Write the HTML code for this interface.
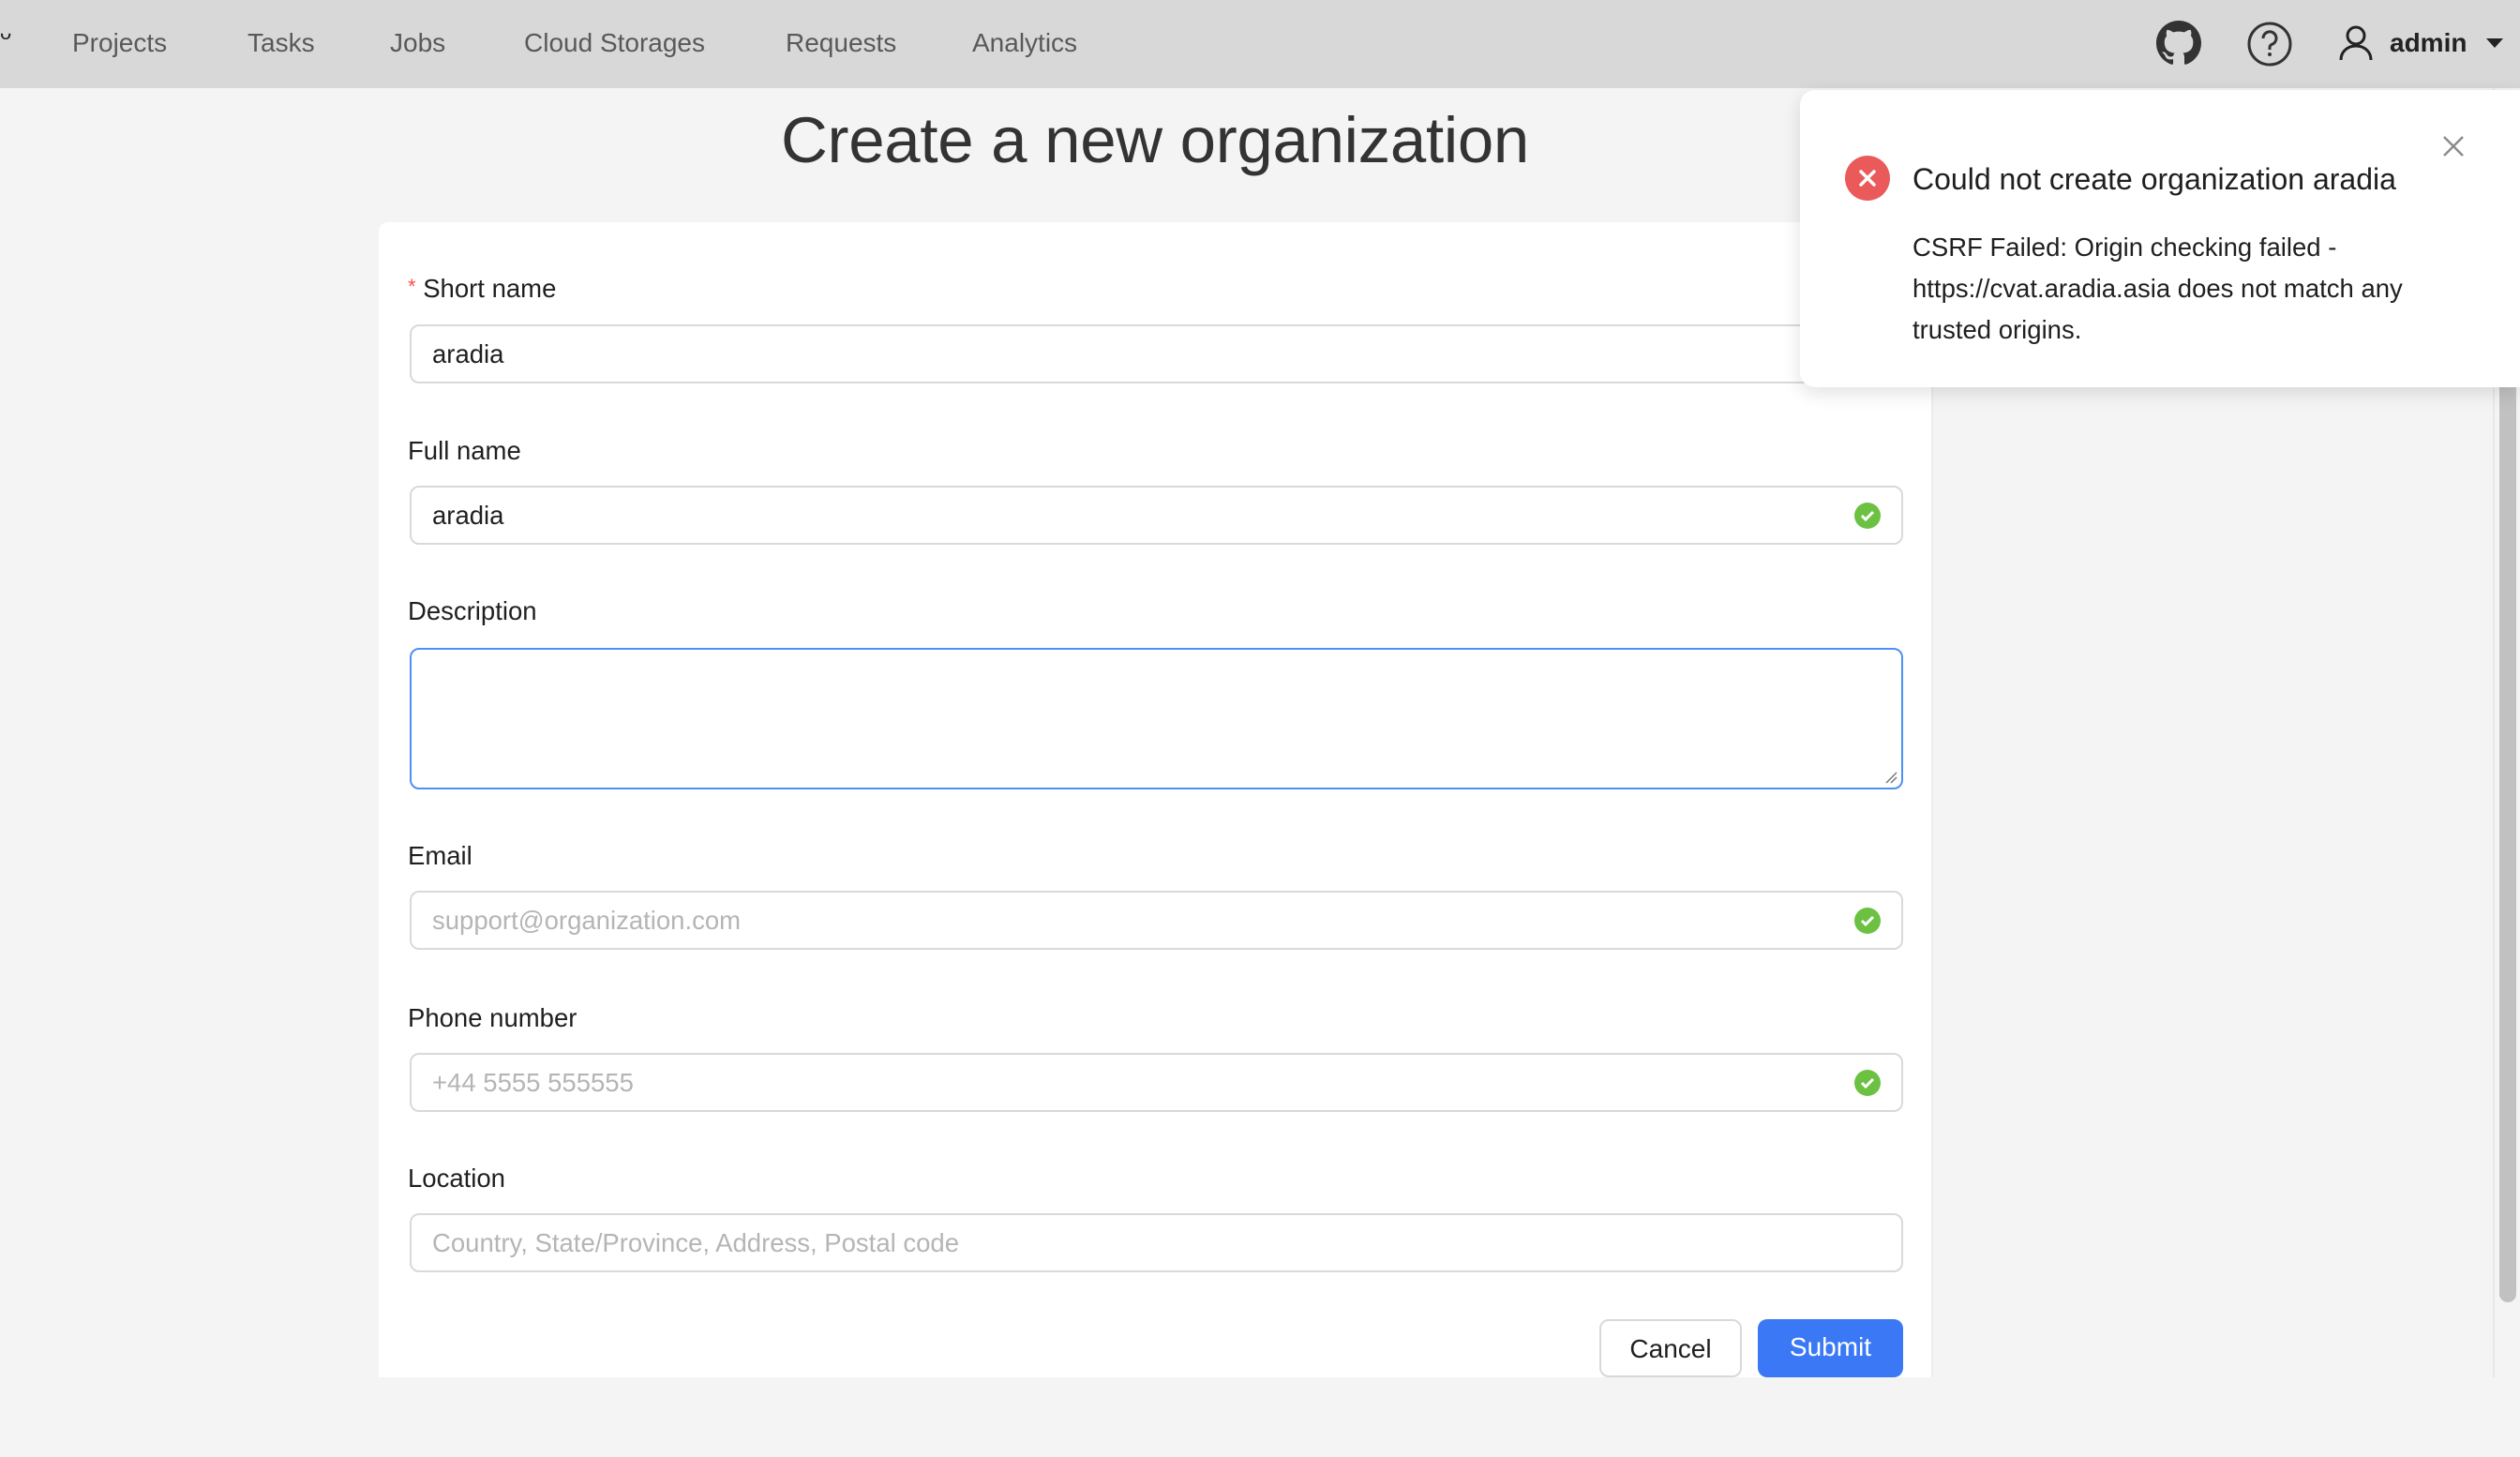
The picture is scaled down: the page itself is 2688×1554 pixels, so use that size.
<!DOCTYPE html>
<html><head><meta charset="utf-8"><style>
*{box-sizing:border-box;margin:0;padding:0}
body{width:2688px;height:1554px;overflow:hidden;background:#f4f4f4;font-family:"Liberation Sans",sans-serif;color:#1f1f1f;position:relative}
.hdr{position:absolute;left:0;top:0;width:2688px;height:94px;background:#d8d8d8}
.nav{position:absolute;top:30px;font-size:28px;color:#595959}
.title{position:absolute;left:404px;width:1656px;top:110px;text-align:center;font-size:69px;color:#333;letter-spacing:-0.3px}
.card{position:absolute;left:404px;top:237px;width:1658px;height:1232px;background:#fff;border-radius:10px 10px 0 0;border-right:2px solid #ececec}
.lbl{position:absolute;left:435px;font-size:27.5px;color:#1f1f1f}
.inp{position:absolute;left:437px;width:1593px;height:63px;border:2px solid #d9d9d9;border-radius:10px;background:#fff;font-size:27.5px;padding-left:22px;line-height:59px;color:#1f1f1f}
.ph{color:#b5b5b5}
.ok{position:absolute;right:22px;top:16px;width:28px;height:28px;border-radius:50%;background:#6cc142}
.ok svg{position:absolute;left:6px;top:7px}
.btn{position:absolute;top:1407px;height:62px;border-radius:10px;font-size:28px;text-align:center;line-height:60px}
.notif{position:absolute;left:1920px;top:96px;width:768px;height:317px;background:#fff;border-radius:16px 0 0 16px;box-shadow:0 6px 20px rgba(0,0,0,.12)}
</style></head><body>
<div class="hdr">
<div style="position:absolute;left:0;top:22px;font-size:22px;color:#222">ᴗ</div>
<div class="nav" style="left:77px">Projects</div>
<div class="nav" style="left:264px">Tasks</div>
<div class="nav" style="left:416px">Jobs</div>
<div class="nav" style="left:559px">Cloud Storages</div>
<div class="nav" style="left:838px">Requests</div>
<div class="nav" style="left:1037px">Analytics</div>
<svg style="position:absolute;left:2300px;top:22px" width="48" height="48" viewBox="0 0 16 16"><path fill="#333" d="M8 0C3.58 0 0 3.58 0 8c0 3.54 2.29 6.53 5.47 7.59.4.07.55-.17.55-.38 0-.19-.01-.82-.01-1.49-2.01.37-2.53-.49-2.69-.94-.09-.23-.48-.94-.82-1.13-.28-.15-.68-.52-.01-.53.63-.01 1.08.58 1.23.82.72 1.21 1.87.87 2.33.66.07-.52.28-.87.51-1.07-1.78-.2-3.64-.89-3.64-3.95 0-.87.31-1.59.82-2.15-.08-.2-.36-1.02.08-2.12 0 0 .67-.21 2.2.82.64-.18 1.32-.27 2-.27.68 0 1.36.09 2 .27 1.53-1.04 2.2-.82 2.2-.82.44 1.1.16 1.92.08 2.12.51.56.82 1.27.82 2.15 0 3.07-1.87 3.75-3.65 3.95.29.25.54.73.54 1.48 0 1.07-.01 1.93-.01 2.2 0 .21.15.46.55.38A8.013 8.013 0 0 0 16 8c0-4.42-3.58-8-8-8z"/></svg>
<svg style="position:absolute;left:2396px;top:22px" width="50" height="50" viewBox="0 0 50 50"><circle cx="25" cy="25" r="22" fill="none" stroke="#333" stroke-width="3"/><path d="M18 19a7 7 0 1 1 9 6.5c-1.5.7-2 1.5-2 3.5v2" fill="none" stroke="#333" stroke-width="3"/><circle cx="25" cy="36" r="2" fill="#333"/></svg>
<svg style="position:absolute;left:2493px;top:26px" width="40" height="40" viewBox="0 0 40 40"><circle cx="20" cy="12" r="9" fill="none" stroke="#222" stroke-width="3"/><path d="M4 38c0-9 7-15 16-15s16 6 16 15" fill="none" stroke="#222" stroke-width="3"/></svg>
<div style="position:absolute;left:2549px;top:30px;font-size:28px;font-weight:bold;color:#222">admin</div>
<div style="position:absolute;left:2652px;top:41px;border-left:9px solid transparent;border-right:9px solid transparent;border-top:10px solid #222"></div>
</div>
<div class="title">Create a new organization</div>
<div class="card"></div>
<div class="lbl" style="top:292px"><span style="color:#ff4d4f;font-size:22px;vertical-align:4px">*</span> Short name</div>
<div class="inp" style="top:346px">aradia</div>
<div class="lbl" style="top:465px">Full name</div>
<div class="inp" style="top:518px">aradia<div class="ok"><svg width="16" height="14" viewBox="0 0 16 14"><path d="M2 7l4 4 8-8" fill="none" stroke="#fff" stroke-width="3"/></svg></div></div>
<div class="lbl" style="top:636px">Description</div>
<div class="inp" style="top:691px;height:151px;border-color:#4d90f5">
<svg style="position:absolute;right:4px;bottom:4px" width="14" height="14"><path d="M2 13L13 2M7 13L13 7" stroke="#777" stroke-width="1.5"/></svg></div>
<div class="lbl" style="top:897px">Email</div>
<div class="inp ph" style="top:950px">support@organization.com<div class="ok"><svg width="16" height="14" viewBox="0 0 16 14"><path d="M2 7l4 4 8-8" fill="none" stroke="#fff" stroke-width="3"/></svg></div></div>
<div class="lbl" style="top:1070px">Phone number</div>
<div class="inp ph" style="top:1123px">+44 5555 555555<div class="ok"><svg width="16" height="14" viewBox="0 0 16 14"><path d="M2 7l4 4 8-8" fill="none" stroke="#fff" stroke-width="3"/></svg></div></div>
<div class="lbl" style="top:1241px">Location</div>
<div class="inp ph" style="top:1294px">Country, State/Province, Address, Postal code</div>
<div class="btn" style="left:1706px;width:152px;border:2px solid #d9d9d9;background:#fff;color:#1f1f1f">Cancel</div>
<div class="btn" style="left:1875px;width:155px;background:#3b78f5;color:#fff">Submit</div>
<div style="position:absolute;left:2659px;top:94px;width:29px;height:1375px;background:#f4f4f4;border-left:2px solid #e8e8e8"></div>
<div style="position:absolute;left:2666px;top:380px;width:18px;height:1009px;background:#c1c1c1;border-radius:9px"></div>
<div class="notif">
<div style="position:absolute;left:48px;top:70px;width:48px;height:48px;border-radius:50%;background:#ea5a5a"><svg width="48" height="48"><path d="M17 17l14 14M31 17L17 31" stroke="#fff" stroke-width="3.5" stroke-linecap="round"/></svg></div>
<div style="position:absolute;left:120px;top:77px;font-size:32px;color:#1f1f1f">Could not create organization aradia</div>
<svg style="position:absolute;left:685px;top:48px" width="24" height="24"><path d="M2 2l20 20M22 2L2 22" stroke="#8c8c8c" stroke-width="2.5"/></svg>
<div style="position:absolute;left:120px;top:146px;font-size:27.5px;line-height:44px;color:#1f1f1f;width:600px">CSRF Failed: Origin checking failed - https://cvat.aradia.asia does not match any trusted origins.</div>
</div>
</body></html>
